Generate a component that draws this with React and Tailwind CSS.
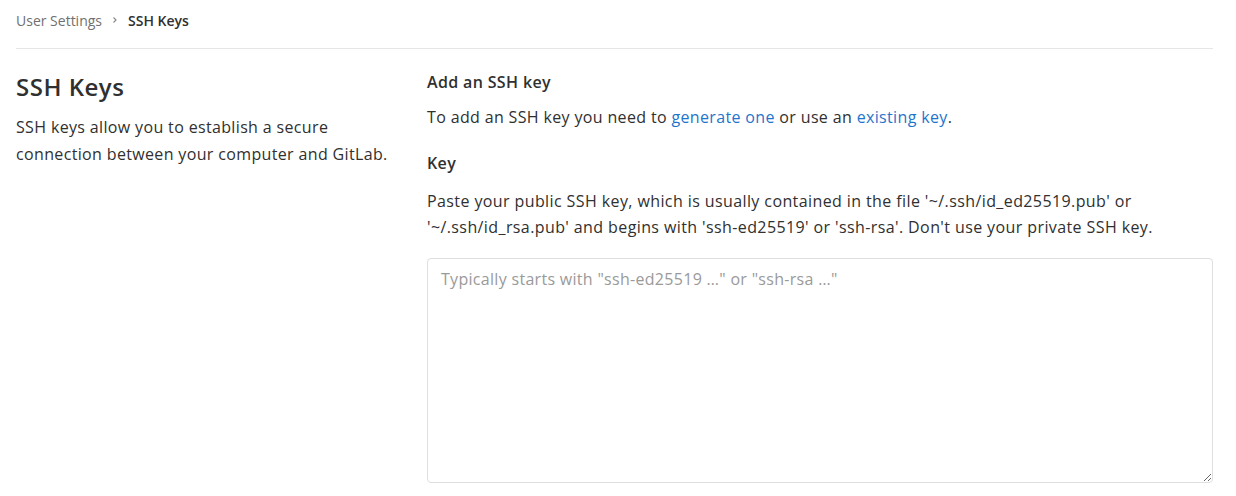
import React from "react";

const FONT = "'Open Sans', 'Noto Sans', sans-serif";

export default function App() {
  return (
    <div className="w-[1236px] h-[496px] bg-white overflow-hidden text-[#303030]" style={{ fontFamily: FONT }}>
      <div className="pl-4 pr-[23px]">
        <div className="h-[49px] border-b border-[#e5e5e5] flex items-center pb-[8px] text-[14px]">
          <span className="text-[#707070]">User Settings</span>
          <svg className="mx-[9px] text-[#888]" width="8" height="8" viewBox="0 0 8 8" fill="none">
            <path d="M2.5 1.5 L5 4 L2.5 6.5" stroke="currentColor" strokeWidth="1.1" />
          </svg>
          <span className="font-semibold text-[#303030]">SSH Keys</span>
        </div>
        <div className="flex tracking-[0.35px]">
          <div className="w-[411px] shrink-0 pt-[22px]">
            <h2 className="text-[24px] leading-[32px] font-semibold tracking-[0.5px]">SSH Keys</h2>
            <p className="mt-[11px] text-[16px] leading-[27px] pr-[30px]">
              SSH keys allow you to establish a secure connection between your computer and GitLab.
            </p>
          </div>
          <div className="flex-1 pt-[21px]">
            <h4 className="text-[16px] leading-[24px] font-semibold">Add an SSH key</h4>
            <p className="mt-[11px] text-[16px] leading-[24px]">
              To add an SSH key you need to <a className="text-[#1f75cb]">generate one</a> or use an{" "}
              <a className="text-[#1f75cb]">existing key</a>.
            </p>
            <div className="mt-[22px] text-[16px] leading-[24px] font-semibold">Key</div>
            <p className="mt-[13px] text-[16px] leading-[26px] tracking-[0.4px]">
              Paste your public SSH key, which is usually contained in the file '~/.ssh/id_ed25519.pub' or '~/.ssh/id_rsa.pub' and begins with 'ssh-ed25519' or 'ssh-rsa'. Don't use your private SSH key.
            </p>
            <textarea
              className="mt-[18px] block w-full h-[225px] border border-[#dfdfdf] rounded-[4px] px-[13px] pt-[8px] text-[16px] leading-[24px] tracking-[0.3px] placeholder:text-[#9a9a9a] outline-none"
              style={{ fontFamily: FONT }}
              placeholder={'Typically starts with "ssh-ed25519 …" or "ssh-rsa …"'}
            />
          </div>
        </div>
      </div>
    </div>
  );
}
